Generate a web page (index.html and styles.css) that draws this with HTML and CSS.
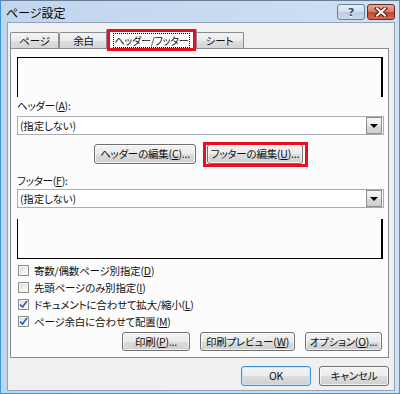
FILE: index.html
```html
<!DOCTYPE html>
<html lang="ja">
<head>
<meta charset="utf-8">
<title>ページ設定</title>
<link rel="stylesheet" href="styles.css">
</head>
<body>
<div class="window">
  <div class="titlebar">
    <span class="title">ページ設定</span>
    <div class="caption">
      <div class="cap help">?</div>
      <div class="cap close">
        <svg width="14" height="10" viewBox="0 0 14 10"><path d="M3 1.5 L11 8.5 M11 1.5 L3 8.5" stroke="#5a1a10" stroke-width="4" stroke-linecap="square"/><path d="M3 1.5 L11 8.5 M11 1.5 L3 8.5" stroke="#fff" stroke-width="2" stroke-linecap="square"/></svg>
      </div>
    </div>
  </div>
  <div class="client">
    <div class="tabs">
      <div class="tab t1">ページ</div>
      <div class="tab t2">余白</div>
      <div class="tab active"><span class="focus">ヘッダー/フッター</span><div class="redbox"></div></div>
      <div class="tab t4">シート</div>
    </div>
    <div class="panel">
      <div class="preview top"></div>
      <div class="lbl lbl-h">ヘッダー(<u>A</u>):</div>
      <div class="combo c-h"><span class="combo-text">(指定しない)</span><div class="drop"><span class="tri"></span></div></div>
      <div class="edit-row">
        <div class="btn b-hedit">ヘッダーの編集(<u>C</u>)...</div>
        <div class="hl-wrap"><div class="btn b-fedit">フッターの編集(<u>U</u>)...</div><div class="redbox2"></div></div>
      </div>
      <div class="lbl lbl-f">フッター(<u>F</u>):</div>
      <div class="combo c-f"><span class="combo-text">(指定しない)</span><div class="drop"><span class="tri"></span></div></div>
      <div class="preview bottom"></div>
      <div class="checks">
        <div class="check"><span class="box"></span><span>寄数/偶数ページ別指定(<u>D</u>)</span></div>
        <div class="check"><span class="box"></span><span>先頭ページのみ別指定(<u>I</u>)</span></div>
        <div class="check"><span class="box on"><svg width="9" height="9" viewBox="0 0 9 9"><path d="M1 4.5 L3.5 7 L8 1" fill="none" stroke="#3556b0" stroke-width="1.6"/></svg></span><span>ドキュメントに合わせて拡大/縮小(<u>L</u>)</span></div>
        <div class="check"><span class="box on"><svg width="9" height="9" viewBox="0 0 9 9"><path d="M1 4.5 L3.5 7 L8 1" fill="none" stroke="#3556b0" stroke-width="1.6"/></svg></span><span>ページ余白に合わせて配置(<u>M</u>)</span></div>
      </div>
      <div class="print-row">
        <div class="btn b-print">印刷(<u>P</u>)...</div>
        <div class="btn b-preview">印刷プレビュー(<u>W</u>)</div>
        <div class="btn b-option">オプション(<u>O</u>)...</div>
      </div>
    </div>
    <div class="dialog-row">
      <div class="btn b-ok">OK</div>
      <div class="btn b-cancel">キャンセル</div>
    </div>
  </div>
</div>
</body>
</html>
```
FILE: styles.css
```css
* { box-sizing: border-box; }
html, body { margin: 0; padding: 0; }
body {
  width: 400px;
  height: 394px;
  overflow: hidden;
  font-family: "Noto Sans CJK JP", "Noto Sans", sans-serif;
  font-size: 10.5px;
  letter-spacing: -0.2px;
  color: #111;
  font-feature-settings: "palt";
  background: #c3d8ee;
}
u { text-decoration: underline; text-underline-offset: 1px; }

.window {
  width: 400px;
  height: 394px;
  display: flex;
  flex-direction: column;
  padding: 0 4px 2px 6px;
  border: 1px solid #3a9ad8;
  border-top-color: #6a7d92;
  background: linear-gradient(90deg, #c0d6ee 0%, #c8dcf1 60%, #cfe1f4 100%);
}

.titlebar {
  height: 21px;
  display: flex;
  align-items: flex-start;
  padding-top: 3px;
}
.title {
  font-size: 12px;
  letter-spacing: 0;
  line-height: 17px;
  margin-left: -1px;
  color: #000;
}
.caption { margin-left: auto; display: flex; gap: 2px; }
.cap {
  width: 28px;
  height: 16px;
  border: 1px solid #6a7f98;
  border-radius: 3px;
  display: flex;
  align-items: center;
  justify-content: center;
}
.help {
  background: linear-gradient(#e6eef8 0%, #d2dfee 50%, #bccee3 51%, #c9d9ec 100%);
  color: #3c4b5e;
  font-family: "DejaVu Sans", sans-serif;
  font-weight: bold;
  font-size: 11px;
  text-shadow: 0 1px 0 #fff;
}
.close {
  border-color: #6b2a1e;
  background: linear-gradient(#e9a796 0%, #d77a66 50%, #c4452d 51%, #d66a50 100%);
}

.client {
  flex: 1;
  background: #f0f0f0;
  border: 1px solid #8ea4bd;
  padding: 6px 5px 0 2px;
  display: flex;
  flex-direction: column;
}

.tabs {
  height: 19px;
  display: flex;
  align-items: flex-end;
}
.tab {
  height: 16px;
  border: 1px solid #898c95;
  border-bottom: none;
  background: linear-gradient(#f3f3f3 0%, #ebebeb 50%, #dedede 51%, #d5d5d5 100%);
  display: flex;
  align-items: center;
  justify-content: center;
  line-height: 14px;
  white-space: nowrap;
  border-radius: 2px 2px 0 0;
}
.t1 { width: 49px; }
.t2 { width: 49px; }
.t4 { width: 49px; }
.tab.active {
  position: relative;
  z-index: 2;
  width: 91px;
  height: 20px;
  margin: 0 -2px -1px -2px;
  background: #fcfcfc;
  padding-top: 1px;
}
.focus {
  border: 1px dotted #000;
  padding: 0 1px;
  line-height: 13px;
  font-size: 10px;
  letter-spacing: -0.2px;
}
.redbox {
  position: absolute;
  left: 0;
  right: 0;
  top: -1px;
  bottom: -2px;
  border: 3px solid #e8101e;
}

.panel {
  height: 310px;
  border: 1px solid #898c95;
  background: #fcfcfc;
  padding: 8px 4px 0 6px;
  display: flex;
  flex-direction: column;
}
.preview {
  height: 40px;
  border-left: 1px solid #000;
  border-right: 2px solid #000;
  margin-right: 1px;
}
.preview.top { border-top: 1px solid #000; }
.preview.bottom { border-bottom: 1px solid #000; margin-top: 11px; }

.lbl { line-height: 14px; }
.lbl-h { margin-top: 2px; }
.lbl-f { margin-top: 10px; }

.combo {
  height: 19px;
  border: 1px solid #a9adb3;
  background: #fff;
  display: flex;
  align-items: center;
  padding-left: 2px;
}
.c-h { margin-top: 3px; }
.c-f { margin-top: 1px; }
.combo-text { line-height: 15px; }
.drop {
  margin-left: auto;
  margin-right: 1px;
  width: 16px;
  height: 17px;
  border: 1px solid #8a8e94;
  background: linear-gradient(#f4f4f4 0%, #e8e8e8 50%, #d8d8d8 51%, #cfcfcf 100%);
  display: flex;
  align-items: center;
  justify-content: center;
}
.tri {
  width: 0;
  height: 0;
  border-left: 4px solid transparent;
  border-right: 4px solid transparent;
  border-top: 4px solid #000;
}

.btn {
  height: 20px;
  border: 1px solid #707070;
  border-radius: 3px;
  background: linear-gradient(#f3f3f3 0%, #ebebeb 50%, #dddddd 51%, #cfcfcf 100%);
  box-shadow: inset 0 0 0 1px rgba(255,255,255,0.7);
  display: flex;
  align-items: center;
  justify-content: center;
  line-height: 14px;
  white-space: nowrap;
}

.edit-row {
  margin-top: 9px;
  display: flex;
  align-items: center;
}
.b-hedit { width: 102px; margin-left: 77px; }
.hl-wrap { position: relative; margin-left: 11px; }
.b-fedit { width: 96px; }
.redbox2 {
  position: absolute;
  left: -4px;
  right: -5px;
  top: -2px;
  bottom: -3px;
  border: 3px solid #e8101e;
}

.checks { margin-top: 3px; display: flex; flex-direction: column; }
.check {
  height: 17px;
  display: flex;
  align-items: center;
  line-height: 14px;
}
.box {
  width: 11px;
  height: 11px;
  margin-left: 1px;
  margin-right: 5px;
  border: 1px solid #8f8f8f;
  background: linear-gradient(135deg, #d8d8d8 0%, #f2f2f2 60%, #ffffff 100%);
  box-shadow: inset 0 0 0 1px #f4f4f4;
  display: flex;
  align-items: center;
  justify-content: center;
}
.box svg { display: block; }

.print-row {
  margin-top: 2px;
  display: flex;
  justify-content: flex-end;
  gap: 10px;
  padding-right: 2px;
}
.print-row .btn { height: 19px; }
.b-print { width: 68px; }
.b-preview { width: 95px; }
.b-option { width: 77px; }

.dialog-row {
  margin-top: 8px;
  display: flex;
  justify-content: flex-end;
  gap: 8px;
}
.b-ok, .b-cancel { width: 70px; height: 20px; }
.b-ok {
  border-color: #3c8fd0;
  box-shadow: inset 0 0 0 1px #c8e6fa;
}
```
